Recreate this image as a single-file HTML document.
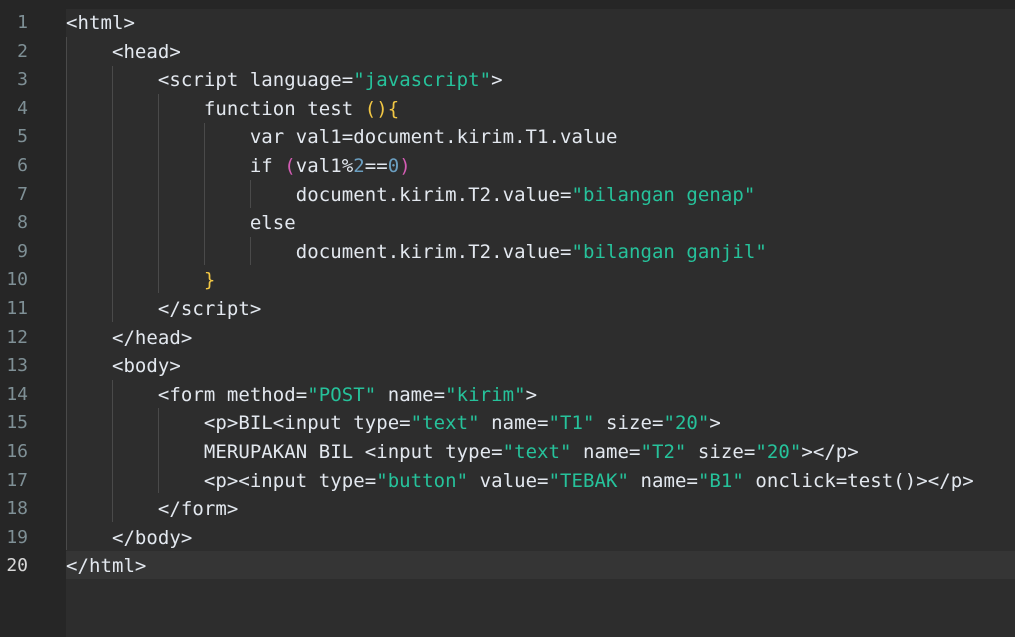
<!DOCTYPE html>
<html><head><style>
body{margin:0;width:1015px;height:637px;background:#2d2d2d;overflow:hidden;position:relative;font-family:"DejaVu Sans Mono","Liberation Mono",monospace;}
.top{position:absolute;left:0;top:0;width:1015px;height:9px;background:#262626;}
.gut{position:absolute;left:0;top:9px;width:66px;height:628px;background:#262626;}
.cur{position:absolute;left:66px;top:551px;width:949px;height:28px;background:#353535;}
.ln{position:absolute;left:0;width:28px;text-align:right;color:#7f9096;font-size:18px;}
.ln.a{color:#d8d8d8}
.code{position:absolute;left:66px;white-space:pre;font-size:19px;letter-spacing:0.05px;color:#e3e8ef;}
.g{position:absolute;width:1px;background:#4a4a4a;}
.s{color:#26c29b}.y{color:#f2c744}.p{color:#d25cb3}.n{color:#6a9ec0}
</style></head><body>
<div class="top"></div><div class="gut"></div><div class="cur"></div>
<div class="g" style="left:66px;top:37px;height:513px"></div>
<div class="g" style="left:112px;top:66px;height:256px"></div>
<div class="g" style="left:112px;top:380px;height:142px"></div>
<div class="g" style="left:158px;top:94px;height:199px"></div>
<div class="g" style="left:158px;top:408px;height:85px"></div>
<div class="g" style="left:204px;top:123px;height:142px"></div>
<div class="g" style="left:250px;top:180px;height:28px"></div>
<div class="g" style="left:250px;top:237px;height:28px"></div>
<div id="c"></div>
<script>
var L=[
'&lt;html&gt;',
'    &lt;head&gt;',
'        &lt;script language=<span class="s">"javascript"</span>&gt;',
'            function test <span class="y">(){</span>',
'                var val1=document.kirim.T1.value',
'                if <span class="p">(</span>val1%<span class="n">2</span>==<span class="n">0</span><span class="p">)</span>',
'                    document.kirim.T2.value=<span class="s">"bilangan genap"</span>',
'                else',
'                    document.kirim.T2.value=<span class="s">"bilangan ganjil"</span>',
'            <span class="y">}</span>',
'        &lt;/script&gt;',
'    &lt;/head&gt;',
'    &lt;body&gt;',
'        &lt;form method=<span class="s">"POST"</span> name=<span class="s">"kirim"</span>&gt;',
'            &lt;p&gt;BIL&lt;input type=<span class="s">"text"</span> name=<span class="s">"T1"</span> size=<span class="s">"20"</span>&gt;',
'            MERUPAKAN BIL &lt;input type=<span class="s">"text"</span> name=<span class="s">"T2"</span> size=<span class="s">"20"</span>&gt;&lt;/p&gt;',
'            &lt;p&gt;&lt;input type=<span class="s">"button"</span> value=<span class="s">"TEBAK"</span> name=<span class="s">"B1"</span> onclick=test()&gt;&lt;/p&gt;',
'        &lt;/form&gt;',
'    &lt;/body&gt;',
'&lt;/html&gt;'];
var h='';
for(var i=0;i<20;i++){var t=9+i*28.6;
h+='<div class="ln'+(i==19?' a':'')+'" style="top:'+(t+1)+'px;line-height:26px">'+(i+1)+'</div>';
h+='<div class="code" style="top:'+t+'px;line-height:28px">'+L[i]+'</div>';}
document.getElementById('c').innerHTML=h;
</script>
</body></html>
